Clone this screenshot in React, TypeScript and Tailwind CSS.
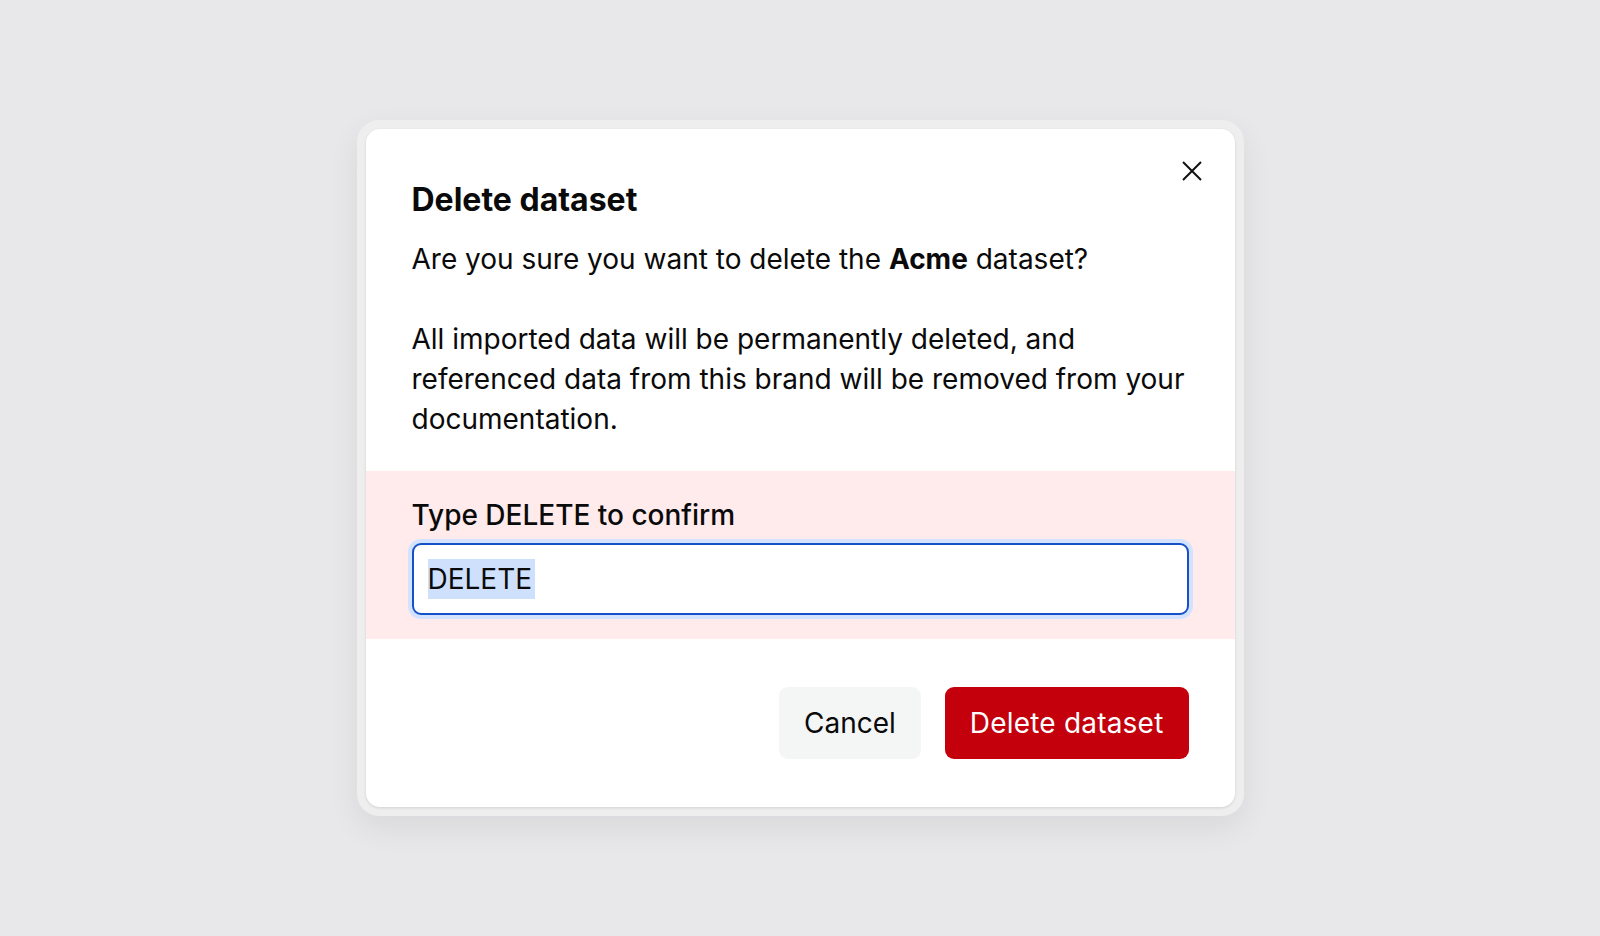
import React from 'react';

export default function App() {
  return (
    <div className="min-h-screen w-full bg-[#e8e8ea] flex items-center justify-center font-['Inter','Liberation_Sans',sans-serif] text-[#0a0a0a]">
      {/* Outer frame */}
      <div className="p-[9px] rounded-[22px] bg-[#eeeeef] shadow-[0_12px_32px_rgba(0,0,0,0.07)]">
        {/* Card */}
        <div className="relative w-[869px] bg-white rounded-[14px] shadow-[0_1px_3px_rgba(0,0,0,0.12)] overflow-hidden">
          <button className="absolute top-[32px] right-[33px] w-5 h-5 flex items-center justify-center text-[#111]">
            <svg width="20" height="20" viewBox="0 0 20 20" fill="none">
              <path d="M1 1L19 19M19 1L1 19" stroke="currentColor" strokeWidth="2" />
            </svg>
          </button>

          {/* Header + body */}
          <div className="pt-[53px] px-[46px] pb-[32px]">
            <h2 className="text-[32px] leading-[36px] font-bold">Delete dataset</h2>
            <p className="mt-[21px] text-[28px] leading-[40px]">
              Are you sure you want to delete the <span className="font-bold">Acme</span> dataset?
            </p>
            <p className="mt-[40px] text-[28px] leading-[40px]">
              All imported data will be permanently deleted, and referenced data from this brand will be removed from your documentation.
            </p>
          </div>

          {/* Confirm section */}
          <div className="bg-[#ffebeb] px-[46px] py-6">
            <label className="block text-[28px] leading-[40px] font-medium">Type DELETE to confirm</label>
            <div className="mt-2 h-[72px] rounded-[9px] border-2 border-[#1551c9] bg-white shadow-[0_0_0_4px_#d3e2fe] pl-[14px] flex items-center">
              <span className="bg-[#cfe0fd] text-[28px] leading-[40px] pr-[3px]">DELETE</span>
            </div>
          </div>

          {/* Footer */}
          <div className="px-[46px] py-12 flex justify-end gap-6">
            <button className="h-[72px] px-[25px] rounded-[9px] bg-[#f4f5f5] text-[28px] text-[#0a0a0a]">Cancel</button>
            <button className="h-[72px] px-[25px] rounded-[9px] bg-[#c3000b] text-[28px] tracking-[0.2px] text-white">Delete dataset</button>
          </div>
        </div>
      </div>
    </div>
  );
}
